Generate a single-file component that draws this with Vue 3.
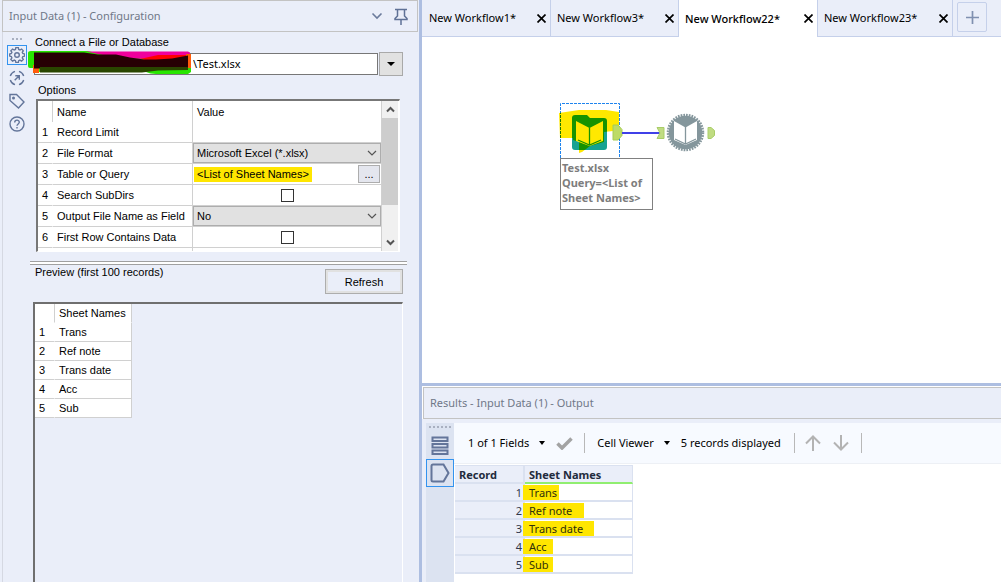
<script setup>
import { ref } from 'vue'

const tabs = ref([
  { name: 'New Workflow1*', size: 'w-s' },
  { name: 'New Workflow3*', size: 'w-s' },
  { name: 'New Workflow22*', size: 'w-l', active: true },
  { name: 'New Workflow23*', size: 'w-m' },
])
const sheets = ['Trans', 'Ref note', 'Trans date', 'Acc', 'Sub']
const marks = ['m-s', 'm-l', 'm-xl', 'm-xs', 'm-xs']
const file = ref('\\Test.xlsx')
const format = ref('Microsoft Excel (*.xlsx)')
const asField = ref('No')
const subDirs = ref(false)
const firstRow = ref(false)
</script>

<template>
  <div class="app">
    <aside class="config">
      <header class="titlebar">
        <h2>Input Data (1) - Configuration</h2>
        <button class="plain" aria-label="Window menu">
          <svg width="12" height="8" viewBox="0 0 12 8"><path d="M1.5 1.5 6 6l4.500-4.500" fill="none" stroke="#6b7b9c" stroke-width="1.600" /></svg>
        </button>
        <button class="plain pin" aria-label="Pin">
          <svg width="14" height="17" viewBox="0 0 14 17"><path d="M1 1.500h12M3.500 1.500v6.500L1 10.500v1h12v-1L10.500 8V1.500M7 11.500V17" fill="none" stroke="#5f7196" stroke-width="1.500" /></svg>
        </button>
      </header>
      <div class="config-body">
        <nav class="rail">
          <span class="dots"><i /><i /><i /></span>
          <button class="rail-btn on" aria-label="Configuration">
            <svg viewBox="0 0 16 16"><path d="M6.700 1h2.600l.4 1.900 1.300.6 1.700-1.100 1.800 1.800-1.100 1.700.6 1.200 1.900.5v2.200l-1.900.5-.6 1.300 1.100 1.700-1.800 1.800-1.700-1.100-1.300.6-.4 1.900H6.700l-.4-1.900-1.300-.6-1.700 1.100-1.800-1.800 1.100-1.700L2 10.300.300 9.800V7.600L2 7.100l.6-1.200-1.100-1.700 1.800-1.800L5 3.500l1.300-.6z" transform="translate(.4 -.3) scale(.96)" /><circle cx="8" cy="8" r="2.300" /></svg>
          </button>
          <button class="rail-btn" aria-label="Navigation">
            <svg viewBox="0 0 16 16"><path d="M6 1.300A7 7 0 0 0 1.300 6M10 1.300A7 7 0 0 1 14.700 6M1.300 10A7 7 0 0 0 6 14.700M14.700 10A7 7 0 0 1 10 14.700M5.700 10.300l4.300-4.300M6.300 5.700h4v4" /></svg>
          </button>
          <button class="rail-btn" aria-label="Annotation">
            <svg viewBox="0 0 16 16"><path d="M1 1.500h6.500l7.500 7.500-5.500 6L1 7.500z" /><circle cx="4.500" cy="5" r=".8" /></svg>
          </button>
          <button class="rail-btn" aria-label="Help">
            <svg viewBox="0 0 16 16"><circle cx="8" cy="8" r="7" /><path d="M5.700 6.500C5.700 3.300 10.400 3.500 10.300 6.300 10.200 8 8 8 8 9.800M8 11v1.500" /></svg>
          </button>
        </nav>
        <div class="form">
          <label class="lbl" for="file">Connect a File or Database</label>
          <div class="file-row">
            <div class="file-box">
              <input id="file" v-model="file" type="text">
              <svg class="scribble" viewBox="28 50 164 25" aria-hidden="true">
                <path d="M28 53q0-2 3-2h57l12 3h88l3 2v16l-3 2h-32q-6 0-10-2l-107 0-2-4h-7q-2 0-2-2z" fill="#28e600" />
                <path d="M86 51.500h102l2 1v7l-70-1z" fill="#f0009c" />
                <path d="M140 59l18-4h30l3 1v6l-30 1z" fill="#f00" />
                <path d="M33 65h6v8h-6zM186 54h5v14h-4z" fill="#ff5c0a" />
                <path d="M34 52.500h50l14 2h18l14 3 14 2h12l16-1 16-3v12l-40 1H34z" fill="#270004" />
                <path d="M40 67h148v3l-30 .5-16 2H40z" fill="#2a4600" />
              </svg>
            </div>
            <button class="drop" aria-label="Choose a connection"><i class="tri" /></button>
          </div>
          <h3 class="lbl options-lbl">Options</h3>
          <div class="options">
            <div class="options-view">
              <table class="opt-table">
                <thead><tr><th /><th>Name</th><th>Value</th></tr></thead>
                <tbody>
                  <tr><td>1</td><td>Record Limit</td><td /></tr>
                  <tr>
                    <td>2</td><td><label for="format">File Format</label></td>
                    <td class="ctl"><div class="sel"><select id="format" v-model="format"><option>Microsoft Excel (*.xlsx)</option></select><svg width="10" height="6" viewBox="0 0 10 6"><path d="M1 1l4 4 4-4" /></svg></div></td>
                  </tr>
                  <tr>
                    <td>3</td><td>Table or Query</td>
                    <td class="ctl"><div class="query"><mark>&lt;List of Sheet Names&gt;</mark><button aria-label="Edit query">...</button></div></td>
                  </tr>
                  <tr><td>4</td><td><label for="sub">Search SubDirs</label></td><td class="chk"><input id="sub" v-model="subDirs" type="checkbox"></td></tr>
                  <tr>
                    <td>5</td><td><label for="asfield">Output File Name as Field</label></td>
                    <td class="ctl"><div class="sel"><select id="asfield" v-model="asField"><option>No</option></select><svg width="10" height="6" viewBox="0 0 10 6"><path d="M1 1l4 4 4-4" /></svg></div></td>
                  </tr>
                  <tr><td>6</td><td><label for="first">First Row Contains Data</label></td><td class="chk"><input id="first" v-model="firstRow" type="checkbox"></td></tr>
                  <tr><td /><td /><td /></tr>
                </tbody>
              </table>
            </div>
            <div class="scroll">
              <button aria-label="Scroll up"><svg width="9" height="7" viewBox="0 0 9 7"><path d="M1 5.500 4.500 2 8 5.500" /></svg></button>
              <div class="thumb" />
              <button class="down" aria-label="Scroll down"><svg width="9" height="7" viewBox="0 0 9 7"><path d="M1 1.500 4.500 5 8 1.500" /></svg></button>
            </div>
          </div>
          <div class="splitter" />
          <div class="preview-head">
            <h3 class="lbl">Preview (first 100 records)</h3>
            <button class="refresh">Refresh</button>
          </div>
          <div class="preview">
            <table class="prev-table">
              <thead><tr><th /><th>Sheet Names</th></tr></thead>
              <tbody><tr v-for="(s, i) in sheets" :key="s"><td>{{ i + 1 }}</td><td>{{ s }}</td></tr></tbody>
            </table>
          </div>
        </div>
      </div>
    </aside>

    <main class="work">
      <nav class="tabs">
        <div v-for="t in tabs" :key="t.name" class="tab" :class="[t.size, { active: t.active }]">
          <button class="tab-name">{{ t.name }}</button>
          <button class="plain close" :aria-label="'Close ' + t.name"><svg width="9" height="9" viewBox="0 0 9 9"><path d="M.5.5l8 8M8.500.5l-8 8" fill="none" stroke="#000" stroke-width="1.700" /></svg></button>
        </div>
        <button class="add" aria-label="New workflow"><svg width="13" height="13" viewBox="0 0 13 13"><path d="M6.500 0v13M0 6.500h13" fill="none" stroke="#8090b0" stroke-width="1.700" /></svg></button>
      </nav>

      <section class="canvas">
        <svg class="flow" width="180" height="70" viewBox="550 95 180 70">
          <path d="M560.500 158V103.500H619.500V158" fill="none" stroke="#1e84ee" stroke-dasharray="3 1" />
          <path d="M575 115h12l3 3h14q3 0 3 3v26q0 3-3 3h-29q-3 0-3-3v-29q0-3 3-3z" fill="#16a292" />
          <path d="M576 121l13.500 7 13.500-7v20l-13.500 5-13.500-5z" fill="#fff" />
          <path d="M589.500 127.500v17M578 140l11.500 5 11.500-5" fill="none" stroke="#16a292" stroke-width="1.300" />
          <path class="ink" d="M559 113l20-3 27 0 13 2v16l-6 1v2l-9 1v10l-14 4-8 6-3 1v-11l-6-2v-2h-13z" fill="#ffe800" />
          <path d="M613 125h5l4 4.500v6l-4 4.500h-5z" fill="#bddb66" stroke="#a6cc55" />
          <path d="M622 133h38" stroke="#4040e8" stroke-width="2" />
          <path d="M657 127.500h7v11h-7l3-5.500z" fill="#c0dc82" stroke="#a9cd68" />
          <path d="M708 127.500h3l3.500 3v5l-3.500 3h-3z" fill="#c0dc82" stroke="#a9cd68" />
          <circle cx="685.500" cy="132.500" r="17.500" fill="none" stroke="#84969c" stroke-width="2.500" stroke-dasharray="1.700 1.050" />
          <circle cx="685.500" cy="132.500" r="16.800" fill="#84969c" />
          <path d="M674 121l11.500 6.500 11.500-6.500v19l-11.500 5-11.500-5z" fill="#fff" />
          <path d="M685.500 127v17M675 139l10.500 5 10.500-5" fill="none" stroke="#84969c" stroke-width="1.300" />
        </svg>
        <p class="note">Test.xlsx<br>Query=&lt;List of<br>Sheet Names&gt;</p>
      </section>

      <section class="results">
        <header class="titlebar res-title"><h2>Results - Input Data (1) - Output</h2></header>
        <div class="res-body">
          <nav class="res-rail">
            <span class="res-dots"><i v-for="n in 6" :key="n" /></span>
            <button aria-label="Messages"><svg width="18" height="20" viewBox="0 0 18 20"><path d="M1.500 1.500h15v3.500h-15zM1.500 8h15v3.500h-15zM1.500 14.500h15V18h-15z" /></svg></button>
            <button class="on" aria-label="Output anchor"><svg width="20" height="20" viewBox="0 0 20 20"><path d="M3 1.500h10.500l5 8.500-5 8.500H3Q1.500 18.500 1.500 17V3Q1.500 1.500 3 1.500z" /></svg></button>
          </nav>
          <div class="res-main">
            <div class="toolbar">
              <button class="menu">1 of 1 Fields<i class="tri" /></button>
              <button class="plain check" aria-label="Apply"><svg width="17" height="13" viewBox="0 0 17 13"><path d="M1.500 6.500 6 11l9.500-9.500" fill="none" stroke="#a3a3a3" stroke-width="3.500" /></svg></button>
              <i class="sep" />
              <button class="menu viewer">Cell Viewer<i class="tri" /></button>
              <span class="count">5 records displayed</span>
              <i class="sep" />
              <button class="plain arrow" aria-label="Previous"><svg width="16" height="16" viewBox="0 0 16 16"><path d="M8 16V1.500M1 8.500l7-7 7 7" fill="none" stroke="#b3b3b3" stroke-width="2" /></svg></button>
              <button class="plain arrow" aria-label="Next"><svg width="16" height="16" viewBox="0 0 16 16"><path d="M8 0v14.500M1 7.500l7 7 7-7" fill="none" stroke="#b3b3b3" stroke-width="2" /></svg></button>
              <i class="sep" />
            </div>
            <table class="res-table">
              <thead><tr><th>Record</th><th>Sheet Names</th></tr></thead>
              <tbody>
                <tr v-for="(s, i) in sheets" :key="s"><td>{{ i + 1 }}</td><td><span class="hl" :class="marks[i]">{{ s }}</span></td></tr>
              </tbody>
            </table>
          </div>
        </div>
      </section>
    </main>
  </div>
</template>

<style>
body { margin: 0; background: #eaeef9; }
</style>

<style scoped>
* { box-sizing: border-box; }
.app { display: grid; grid-template-columns: 422fr 579fr; height: 100vh; overflow: hidden; background: #eaeef9; color: #000; font: 11px/16px "Noto Sans", "Open Sans", sans-serif; }
button, input, select { font: inherit; color: inherit; margin: 0; padding: 0; border: 0; background: none; border-radius: 0; }
h2, h3, p { margin: 0; font: inherit; }
svg { display: block; }
table { border-collapse: separate; border-spacing: 0; }
th, td { padding: 0; text-align: left; font-weight: normal; white-space: nowrap; }
.plain { display: flex; align-items: center; justify-content: center; }
.tri { display: block; border: 3px solid transparent; border-top: 4px solid #000; border-bottom: 0; }

.config { display: flex; flex-direction: column; min-width: 0; padding-left: 2px; border-right: 3px solid #adbee1; }
.titlebar { display: flex; align-items: center; height: 32px; flex: none; padding: 0 9px 0 6px; border: 1px solid #c3c3c3; color: #707888; }
.config .titlebar { margin-right: 1px; }
.titlebar h2 { flex: 1; white-space: nowrap; }
.pin { margin-left: 11px; }
.config-body { display: flex; flex: 1; min-height: 0; border-left: 1px solid #d5d8e2; }
.rail { display: flex; flex-direction: column; align-items: center; width: 27px; flex: none; padding-top: 6px; gap: 3px; }
.dots, .res-dots { display: flex; gap: 2px; }
.dots { margin-bottom: 2px; }
.dots i, .res-dots i { width: 2px; height: 2px; background: #a9b0c0; }
.rail-btn { display: flex; align-items: center; justify-content: center; width: 20px; height: 20px; }
.rail-btn.on { border: 1px solid #3393ef; }
.rail-btn svg { width: 16px; height: 16px; flex: none; fill: none; stroke: #63759a; stroke-width: 1.400; }

.form { display: flex; flex-direction: column; flex: 1; min-width: 0; padding: 2px 12px 0 0; font: 11px/16px "Liberation Sans", Arial, sans-serif; }
.lbl { display: block; padding-left: 5px; white-space: nowrap; }
.file-row { display: flex; align-items: center; gap: 1px; margin: 2px 4px 0 4px; }
.file-box { position: relative; flex: 1; min-width: 0; }
.file-box input { display: block; width: 100%; height: 22px; padding: 0 0 2px 158px; border: 1px solid #777; background: #fff; font-family: "Noto Sans", sans-serif; font-size: 11px; }
.scribble { position: absolute; left: -6px; top: -3px; width: 164px; height: 25px; }
.drop { display: flex; align-items: center; justify-content: center; width: 24px; height: 24px; border: 1px solid #a9a9a9; background: #e1e1e1; }
.drop .tri { border-width: 4px 4px 0; }
.options-lbl { margin: 6px 0 1px 3px; }
.options { display: flex; height: 153px; margin: 0 7px 0 6px; border: 2px solid #777; border-right: 1px solid #fff; border-bottom: 1px solid #fff; background: #fff; }
.options-view { flex: 1; min-width: 0; overflow: hidden; }
.opt-table { width: 100%; table-layout: fixed; }
.opt-table th, .opt-table td { height: 21px; border-right: 1px solid #d0d0d0; border-bottom: 1px solid #d0d0d0; padding-left: 4px; }
.opt-table th { border-bottom: 0; }
.opt-table th:first-child { width: 15px; }
.opt-table th:nth-child(2) { width: 140px; }
.opt-table td:first-child { border-right-color: transparent; }
.opt-table .ctl { padding: 0; }
.opt-table .chk { padding: 0; }
.chk input { display: block; appearance: none; width: 13px; height: 13px; margin: 0 auto; border: 1px solid #333; background: #fff; }
.sel { position: relative; }
.sel select { display: block; appearance: none; width: 100%; height: 20px; padding-left: 3px; border: 1px solid #adadad; background: #e1e1e1; }
.sel svg { position: absolute; right: 4px; top: 7px; fill: none; stroke: #555; stroke-width: 1.200; pointer-events: none; }
.query { display: flex; justify-content: space-between; align-items: center; height: 20px; padding-left: 1px; }
.query mark { padding: 0 3px; background: #ffe600; color: #000; line-height: 15px; }
.query button { width: 22px; height: 18px; margin-right: 1px; border: 1px solid #adadad; background: #e4e6ee; line-height: 12px; }
.scroll { display: flex; flex-direction: column; width: 17px; background: #f0f0f0; border-right: 1px solid #fff; }
.scroll button { display: flex; align-items: center; justify-content: center; height: 17px; }
.scroll svg { fill: none; stroke: #555; stroke-width: 2; }
.thumb { height: 87px; background: #cdcdcd; }
.down { margin-top: auto; }
.splitter { flex: none; height: 4px; margin: 9px 0 0; border-top: 1px solid #a0a0a0; border-bottom: 1px solid #a0a0a0; background: #fff; }
.preview-head { display: flex; justify-content: space-between; padding-right: 4px; line-height: 14px; }
.refresh { width: 78px; height: 25px; margin-top: 4px; border: 1px solid #adadad; box-shadow: inset 0 0 0 2px #e1e1e1; }
.preview { flex: 1; min-height: 0; margin: 8px 4px 0 3px; border: solid #6f6f6f; border-width: 2px 1px 0 2px; border-right-color: #fff; }
.prev-table { background: #fff; }
.prev-table th, .prev-table td { height: 19px; padding-left: 4px; border-right: 1px solid #d0d0d0; border-bottom: 1px solid #d0d0d0; }
.prev-table th { border-bottom-color: transparent; background-clip: padding-box; }
.prev-table tr > :first-child { width: 20px; }
.prev-table tr > :last-child { width: 77px; }
.prev-table td:first-child { border-right-color: transparent; }

.work { display: grid; grid-template-rows: auto 346fr 199fr; min-width: 0; min-height: 0; background: #fff; }
.tabs { display: flex; height: 37px; min-width: 0; padding-left: 1px; border-bottom: 1px solid #c5d0ea; background: #eaeef9; }
.tab { display: flex; align-items: center; justify-content: space-between; height: 36px; padding: 0 4px 0 6px; border-right: 1px solid #c5d0ea; }
.tab-name { white-space: nowrap; }
.tab.active { height: 37px; background: #fff; }
.active .tab-name { font-weight: 500; }
.w-s { width: 128px; }
.w-m { width: 135px; }
.w-l { width: 139px; }
.add { display: flex; align-items: center; justify-content: center; width: 30px; height: 30px; margin: 2px 0 0 4px; border: 1px solid #c5d0ea; border-radius: 2px; }

.canvas { position: relative; background: #fff; overflow: hidden; }
.flow { position: absolute; left: 128px; top: 58px; isolation: isolate; }
.ink { mix-blend-mode: multiply; }
.note { position: absolute; left: 138px; top: 121px; width: 93px; height: 52px; padding: 1px; border: 1px solid #808080; background: #fff; color: #7d7d7d; font-weight: bold; line-height: 15px; white-space: nowrap; }

.results { display: flex; flex-direction: column; min-height: 0; padding-top: 1px; border-top: 3px solid #adbee1; background: #fff; }
.res-title { margin-left: 1px; border-right: 0; background: #eaeef9; }
.res-body { display: flex; flex: 1; min-height: 0; border-top: 4px solid #eaeef9; border-left: 4px solid #eaeef9; }
.res-rail { display: flex; flex-direction: column; align-items: center; width: 28px; flex: none; padding-top: 3px; background: #dce3f1; }
.res-rail button { display: flex; align-items: center; justify-content: center; width: 28px; height: 28px; }
.res-rail .res-dots + button { margin: 4px 0 -1px; }
.res-rail .on { border: 1px solid #3393ef; }
.res-rail svg { fill: none; stroke: #63759a; stroke-width: 2; }
.res-main { flex: 1; min-width: 0; }
.toolbar { display: flex; align-items: center; height: 41px; padding-left: 14px; border-bottom: 1px solid #edf0f5; background: #f7faff; white-space: nowrap; }
.menu { display: flex; align-items: center; gap: 10px; }
.check { margin: 0 11px 0 11px; }
.sep { width: 1px; height: 20px; background: #b8b8b8; }
.viewer { margin-left: 12px; }
.count { margin: 0 13px 0 11px; }
.arrow { margin-right: 12px; }
.sep + .arrow { margin-left: 10px; }
.res-table { margin: 1px 0 0 1px; border-top: 1px solid #dae1f0; }
.res-table th, .res-table td { height: 18px; line-height: 15px; border-right: 1px solid #dae1f0; border-bottom: 2px solid #dae1f0; }
.res-table th { padding-left: 4px; font-weight: bold; color: #222b3d; background: #eaeef9; }
.res-table th:first-child, .res-table td:first-child { width: 70px; border-right-width: 2px; }
.res-table th:last-child { width: 108px; padding-left: 4px; border-bottom-color: #90ee70; }
.res-table td:first-child { padding-right: 1px; text-align: right; color: #30394d; background: #eaeef9; }
.hl { display: block; margin-left: -2px; padding-left: 6px; background: #ffe600; color: #30300a; }
.m-xs { width: 30px; }
.m-s { width: 36px; }
.m-l { width: 61px; }
.m-xl { width: 71px; }
</style>
